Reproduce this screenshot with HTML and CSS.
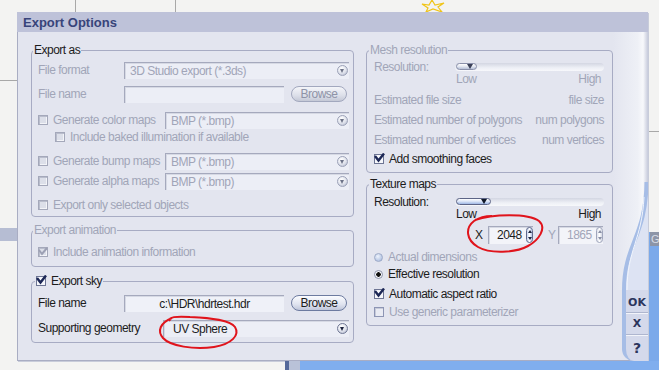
FILE: index.html
```html
<!DOCTYPE html>
<html lang="en">
<head>
  <meta charset="UTF-8">
  <title>Export Options</title>
  <link rel="stylesheet" href="styles.css">
</head>
<body>
  <div class="desk">
    <!-- desktop bits behind the dialog -->
    <div class="deco vline v1"></div>
    <div class="deco vline v2"></div>
    <div class="deco hline h1"></div>
    <div class="deco hline h2"></div>
    <div class="deco win-left"></div>
    <div class="deco blue-right"></div>
    <div class="deco blue-bottom"></div>
    <div class="deco win-g">G</div>
    <svg class="deco star" width="26" height="12" viewBox="0 0 26 12">
      <path d="M2 4 L9 5 L12 0 L15 5 L24 3 L18 7 L22 12 L13 9 L6 12 L8 8 Z" fill="none" stroke="#f0c419" stroke-width="1.2"/>
    </svg>

    <div class="dialog">
      <div class="titlebar">Export Options</div>
      <div class="dlg-body">

        <div class="col col-left">
          <fieldset class="group g-export">
            <legend>Export as</legend>
            <div class="row">
              <span class="lbl w86 dim">File format</span>
              <div class="combo"><span class="dim">3D Studio export (*.3ds)</span><i class="drop off"></i></div>
            </div>
            <div class="row mt4">
              <span class="lbl w86 dim">File name</span>
              <div class="field w160"></div>
              <span class="btn off">Browse</span>
            </div>
            <div class="row mt6">
              <span class="lbl w127 dim"><i class="cb off"></i>Generate color maps</span>
              <div class="combo"><span class="dim">BMP (*.bmp)</span><i class="drop off"></i></div>
            </div>
            <div class="row s sub">
              <span class="lbl dim"><i class="cb off"></i>Include baked illumination if available</span>
            </div>
            <div class="row mt7">
              <span class="lbl w127 dim"><i class="cb off"></i>Generate bump maps</span>
              <div class="combo"><span class="dim">BMP (*.bmp)</span><i class="drop off"></i></div>
            </div>
            <div class="row">
              <span class="lbl w127 dim"><i class="cb off"></i>Generate alpha maps</span>
              <div class="combo"><span class="dim">BMP (*.bmp)</span><i class="drop off"></i></div>
            </div>
            <div class="row s mt7">
              <span class="lbl dim"><i class="cb off"></i>Export only selected objects</span>
            </div>
          </fieldset>

          <fieldset class="group g-anim">
            <legend class="dim">Export animation</legend>
            <div class="row s">
              <span class="lbl dim">
                <i class="cb off"><svg width="10" height="9" viewBox="0 0 10 9"><path d="M1 3 L4 7 L9 1" fill="none" stroke="#9ca0b4" stroke-width="2"/></svg></i>Include animation information
              </span>
            </div>
          </fieldset>

          <fieldset class="group g-sky">
            <legend class="cb-legend">
              <i class="cb on"><svg width="11" height="10" viewBox="0 0 11 10"><path d="M1 3 L4.5 7.5 L10 0.5" fill="none" stroke="#1c2756" stroke-width="2.4"/></svg></i>Export sky
            </legend>
            <div class="row">
              <span class="lbl w86">File name</span>
              <div class="field w160 filled">c:\HDR\hdrtest.hdr</div>
              <span class="btn">Browse</span>
            </div>
            <div class="row mt5">
              <span class="lbl w125">Supporting geometry</span>
              <div class="combo"><span class="uv">UV Sphere</span><i class="drop"></i></div>
            </div>
          </fieldset>
        </div>

        <div class="col col-right">
          <fieldset class="group g-mesh">
            <legend class="dim">Mesh resolution</legend>
            <div class="row t">
              <span class="lbl w81 dim">Resolution:</span>
              <div class="slider"><span class="thumb small"><b></b></span></div>
            </div>
            <div class="row lowhigh dim"><span>Low</span><span>High</span></div>
            <div class="row s mt9 split dim"><span>Estimated file size</span><span>file size</span></div>
            <div class="row s mt6 split dim"><span>Estimated number of polygons</span><span>num polygons</span></div>
            <div class="row s mt6 split dim"><span>Estimated number of vertices</span><span>num vertices</span></div>
            <div class="row s mt5">
              <span class="lbl"><i class="cb on"><svg width="11" height="10" viewBox="0 0 11 10"><path d="M1 3 L4.5 7.5 L10 0.5" fill="none" stroke="#1c2756" stroke-width="2.4"/></svg></i>Add smoothing faces</span>
            </div>
          </fieldset>

          <fieldset class="group g-tex">
            <legend>Texture maps</legend>
            <div class="row t">
              <span class="lbl w81">Resolution:</span>
              <div class="slider"><span class="thumb"><b></b></span></div>
            </div>
            <div class="row lowhigh"><span>Low</span><span>High</span></div>
            <div class="row spin-row mt5">
              <span class="axis">X</span>
              <div class="spin"><span>2048</span><i class="spinner"></i></div>
              <span class="axis ay dim">Y</span>
              <div class="spin off"><span class="dim">1865</span><i class="spinner off"></i></div>
            </div>
            <div class="row s mt6">
              <span class="lbl dim"><i class="radio off"></i>Actual dimensions</span>
            </div>
            <div class="row s mt3">
              <span class="lbl"><i class="radio sel"></i>Effective resolution</span>
            </div>
            <div class="row s mt6">
              <span class="lbl"><i class="cb on"><svg width="11" height="10" viewBox="0 0 11 10"><path d="M1 3 L4.5 7.5 L10 0.5" fill="none" stroke="#1c2756" stroke-width="2.4"/></svg></i>Automatic aspect ratio</span>
            </div>
            <div class="row s mt4">
              <span class="lbl dim"><i class="cb plain"></i>Use generic parameterizer</span>
            </div>
          </fieldset>
        </div>

        <div class="side">
          <svg class="side-top" width="35" height="258" viewBox="0 0 35 258">
            <defs>
              <linearGradient id="sideBg" x1="0" y1="0" x2="1" y2="0">
                <stop offset="0" stop-color="#e3e5ef"/>
                <stop offset="0.7" stop-color="#eef0f6"/>
                <stop offset="0.86" stop-color="#f7f8fb"/>
                <stop offset="1" stop-color="#c6cadb"/>
              </linearGradient>
            </defs>
            <rect width="35" height="258" fill="url(#sideBg)"/>
            <path d="M35 150 C34 205 11 212 11 258 L35 258 Z" fill="#dde3f3"/>
            <path d="M33.5 150 C33 205 11 212 11 258" fill="none" stroke="#a6bde6" stroke-width="4"/>
            <path d="M31 165 C29 208 14 218 14 258" fill="none" stroke="#f1f5fd" stroke-width="1"/>
          </svg>
          <div class="btns">
            <span class="sbtn ok">OK</span>
            <span class="sbtn">X</span>
            <span class="sbtn last">?</span>
          </div>
        </div>

      </div>
    </div>

    <!-- red pen marks on the screenshot -->
    <svg class="marks" width="659" height="370" viewBox="0 0 659 370">
      <path d="M170 321 C168 317 176 316 190 317 C212 318 230 320 235 327 C240 335 232 344 214 347 C194 350 170 346 163 338 C157 331 160 323 172 318" fill="none" stroke="#e0141c" stroke-width="2"/>
      <path d="M475 220 C492 214 528 213 539 221 C547 228 539 240 528 246 C515 253 490 254 478 247 C466 240 465 228 474 221 C480 217 486 216 492 216" fill="none" stroke="#e0141c" stroke-width="2"/>
    </svg>
  </div>
</body>
</html>
```

FILE: styles.css
```css
body {
  margin: 0;
  background-color: #f3f3f2;
  font-family: "Liberation Sans", Arial, sans-serif;
  font-size: 12px;
  letter-spacing: -0.5px;
  color: #1c1c1c;
}

.desk {
  position: relative;
  width: 659px;
  height: 370px;
  padding-top: 12px;
  box-sizing: border-box;
  overflow: hidden;
}

/* desktop decoration */
.deco {
  position: absolute;
}

.vline {
  top: 0;
  width: 1px;
  height: 12px;
  background-color: #a8a8a8;
}

.v1 { left: 75px; }
.v2 { left: 175px; }

.hline {
  height: 1px;
  background-color: #a8a8a8;
}

.h1 { left: 0; top: 80px; width: 17px; }
.h2 { left: 649px; top: 131px; width: 10px; }

.win-left {
  left: 0;
  top: 228px;
  width: 17px;
  height: 13px;
  background-color: #b6bdd3;
}

.blue-right {
  left: 649px;
  top: 232px;
  width: 10px;
  height: 138px;
  background-color: #7ba9ea;
}

.blue-bottom {
  left: 285px;
  top: 361px;
  width: 374px;
  height: 9px;
  background: linear-gradient(to right, #55699a 0, #55699a 4px, #b9c2d8 4px, #b9c2d8 15px, #80aeee 15px);
}

.win-g {
  left: 650px;
  top: 232px;
  width: 9px;
  height: 14px;
  background-color: #8d95a7;
  color: #d8dce6;
  font-size: 11px;
  line-height: 14px;
  padding-left: 1px;
}

.star {
  left: 420px;
  top: 0;
}

.marks {
  position: absolute;
  left: 0;
  top: 0;
  pointer-events: none;
}

/* dialog */
.dialog {
  margin-left: 17px;
  width: 631px;
  height: 349px;
  background-color: #e3e5ef;
  box-shadow: inset 1px 0 0 #a9adc3, inset 0 -1px 0 #a9adc3, 1px 1px 0 #c8ccda;
}

.titlebar {
  height: 20px;
  padding-left: 6px;
  background-color: #bec2d9;
  color: #38447a;
  font-weight: bold;
  font-size: 13px;
  letter-spacing: 0;
  line-height: 21px;
}

.dlg-body {
  display: flex;
  height: 329px;
  padding-left: 14px;
}

.col {
  padding-top: 11px;
  display: flex;
  flex-direction: column;
}

.col-left { width: 323px; }
.col-right { width: 247px; margin-left: 12px; }

.group {
  margin: 0;
  min-width: 0;
  border: 1px solid #a7abc3;
  border-radius: 4px;
}

.group legend {
  padding: 0 1px;
  margin-left: -5px;
  line-height: 14px;
}

.g-export { padding: 3px 4px 4px 6px; }
.g-anim { padding: 8px 4px 7px 6px; margin-top: 6px; }
.g-sky { padding: 5px 4px 4px 6px; margin-top: 7px; }
.g-mesh { padding: 3px 8px 6px 7px; }
.g-tex { padding: 4px 8px 6px 7px; margin-top: 4px; }

.group legend.cb-legend {
  margin-left: -3px;
  display: flex;
  align-items: center;
}

.dim { color: #a1a5b8; }

.row {
  display: flex;
  align-items: center;
  height: 20px;
}

.row.s { height: 14px; }
.row.t { height: 13px; }
.row.sub { padding-left: 17px; }

.mt3 { margin-top: 3px; }
.mt4 { margin-top: 4px; }
.mt5 { margin-top: 5px; }
.mt6 { margin-top: 6px; }
.mt7 { margin-top: 7px; }
.mt9 { margin-top: 9px; }

.lbl {
  display: flex;
  align-items: center;
  white-space: nowrap;
  flex-shrink: 0;
}

.w81 { width: 81px; }
.w86 { width: 86px; }
.w125 { width: 125px; }
.w127 { width: 127px; }
.w160 { width: 160px; }

/* inputs */
.combo, .field, .spin {
  height: 17px;
  box-sizing: border-box;
  display: flex;
  align-items: center;
  background-color: #eceef6;
  border-top: 1px solid #a5a9bd;
  border-left: 1px solid #a5a9bd;
  box-shadow: inset 1px 1px 0 #d6d9e4;
  white-space: nowrap;
}

.combo {
  flex: 1;
  padding-left: 5px;
}

.combo .uv { padding-left: 4px; }

.field.filled {
  justify-content: center;
  background-color: #eff1f8;
}

.drop {
  width: 11px;
  height: 11px;
  margin: 0 1px 0 auto;
  border-radius: 50%;
  box-sizing: border-box;
  border: 1px solid #6f7794;
  background: radial-gradient(circle at 40% 30%, #ffffff 0, #dfe2ec 55%, #aab0c6 100%);
  position: relative;
}

.drop::after {
  content: "";
  position: absolute;
  left: 2px;
  top: 3px;
  border-left: 2.5px solid transparent;
  border-right: 2.5px solid transparent;
  border-top: 4px solid #1d2440;
}

.drop.off { border-color: #9ca2b8; }
.drop.off::after { border-top-color: #6d7388; }

.btn {
  width: 56px;
  height: 16px;
  margin-left: 7px;
  box-sizing: border-box;
  border: 1px solid #6d7ba0;
  border-radius: 8px;
  background: linear-gradient(#fbfcff, #dfe3ef 60%, #bfc6da);
  color: #1c1c1c;
  text-align: center;
  line-height: 14px;
}

.btn.off {
  border-color: #a2a8be;
  background: linear-gradient(#f4f5f9, #dcdfe9 60%, #c4c8d6);
  color: #8e93a7;
}

/* checks and radios */
.cb {
  width: 10px;
  height: 10px;
  margin-right: 5px;
  box-sizing: border-box;
  border: 1px solid #a4a8ba;
  background-color: #dcdfe9;
  box-shadow: inset 1px 1px 0 #b9bdcc, inset -1px -1px 0 #f3f4f8;
  position: relative;
  flex-shrink: 0;
}

.cb svg {
  position: absolute;
  left: -1px;
  top: -1px;
}

.cb.on {
  border-color: #6d7594;
  background-color: #f6f7fb;
  box-shadow: none;
}

.cb.on svg { top: -2px; }

.cb.plain {
  border-color: #8d95b4;
  background-color: #e9ebf3;
  box-shadow: inset 1px 1px 0 #c6cad9;
}

.radio {
  width: 9px;
  height: 9px;
  margin-right: 5px;
  border-radius: 50%;
  box-sizing: border-box;
  flex-shrink: 0;
}

.radio.off {
  border: 1px solid #9eabc8;
  background: radial-gradient(circle at 40% 35%, #eef3fc 0, #b6c6e4 70%, #94a6cc 100%);
}

.radio.sel {
  border: 1px solid #8e94ac;
  background: radial-gradient(circle, #111 0, #111 2px, #f4f5f9 2.5px);
}

/* slider */
.slider {
  flex: 1;
  height: 8px;
  border-radius: 4px;
  background: linear-gradient(#d3d6e2, #eef0f6 60%, #f7f8fb);
  display: flex;
  align-items: center;
  padding-left: 1px;
}

.thumb {
  width: 35px;
  height: 7px;
  box-sizing: border-box;
  border: 1px solid #5c6486;
  border-radius: 4px;
  background: linear-gradient(#ffffff, #d9e3f6 50%, #9fb8e6);
  position: relative;
}

.thumb.small {
  width: 21px;
  border-color: #8a90aa;
  background: linear-gradient(#ffffff, #e2e6f0 50%, #b6c0d8);
}

.thumb b {
  position: absolute;
  right: 3px;
  top: 0;
  border-left: 3px solid transparent;
  border-right: 3px solid transparent;
  border-top: 5px solid #101828;
}

.thumb.small b { border-top-color: #3a4058; }

.lowhigh {
  height: 11px;
  padding: 0 3px 0 82px;
  justify-content: space-between;
}

.g-tex .lowhigh { height: 12px; }

.split {
  justify-content: space-between;
}

/* spin boxes */
.spin-row {
  height: 19px;
  padding-left: 101px;
}

.axis {
  width: 13px;
}

.axis.ay {
  margin-left: 15px;
  width: 10px;
}

.spin {
  width: 45px;
  height: 18px;
  padding-left: 8px;
  background-color: #f3f4f9;
}

.spinner {
  width: 7px;
  height: 16px;
  margin: 0 0 0 auto;
  box-sizing: border-box;
  border: 1px solid #5f688c;
  border-radius: 4px;
  background: linear-gradient(to right, #c9d5ee, #ffffff 50%, #b3c4e6);
  position: relative;
}

.spinner::before,
.spinner::after {
  content: "";
  position: absolute;
  left: 0.5px;
  border-left: 2px solid transparent;
  border-right: 2px solid transparent;
}

.spinner::before { top: 2px; border-bottom: 3px solid #1e2540; }
.spinner::after { bottom: 2px; border-top: 3px solid #1e2540; }

.spinner.off { border-color: #a0a6bc; background: linear-gradient(to right, #dfe2ec, #ffffff 50%, #d3d7e3); }
.spinner.off::before { border-bottom-color: #8a90a6; }
.spinner.off::after { border-top-color: #8a90a6; }

/* right side strip with OK / X / ? */
.side {
  width: 35px;
  display: flex;
  flex-direction: column;
}

.side-top {
  display: block;
}

.btns {
  height: 71px;
  margin-left: 9px;
  border-left: 4px solid #a6bde6;
  border-bottom-left-radius: 12px;
  background-color: #d4d9eb;
  display: flex;
  flex-direction: column;
}

.sbtn {
  height: 21px;
  border-bottom: 1px solid #aeb6cf;
  box-shadow: 0 1px 0 #f2f4fa;
  text-align: center;
  line-height: 22px;
  font-family: "DejaVu Sans", sans-serif;
  font-weight: bold;
  font-size: 11px;
  letter-spacing: 0;
  color: #2b345c;
}

.sbtn.ok {
  height: 22px;
  line-height: 26px;
}

.sbtn.last {
  flex: 1;
  border-bottom: none;
  box-shadow: none;
  font-size: 14px;
  line-height: 26px;
}
```
